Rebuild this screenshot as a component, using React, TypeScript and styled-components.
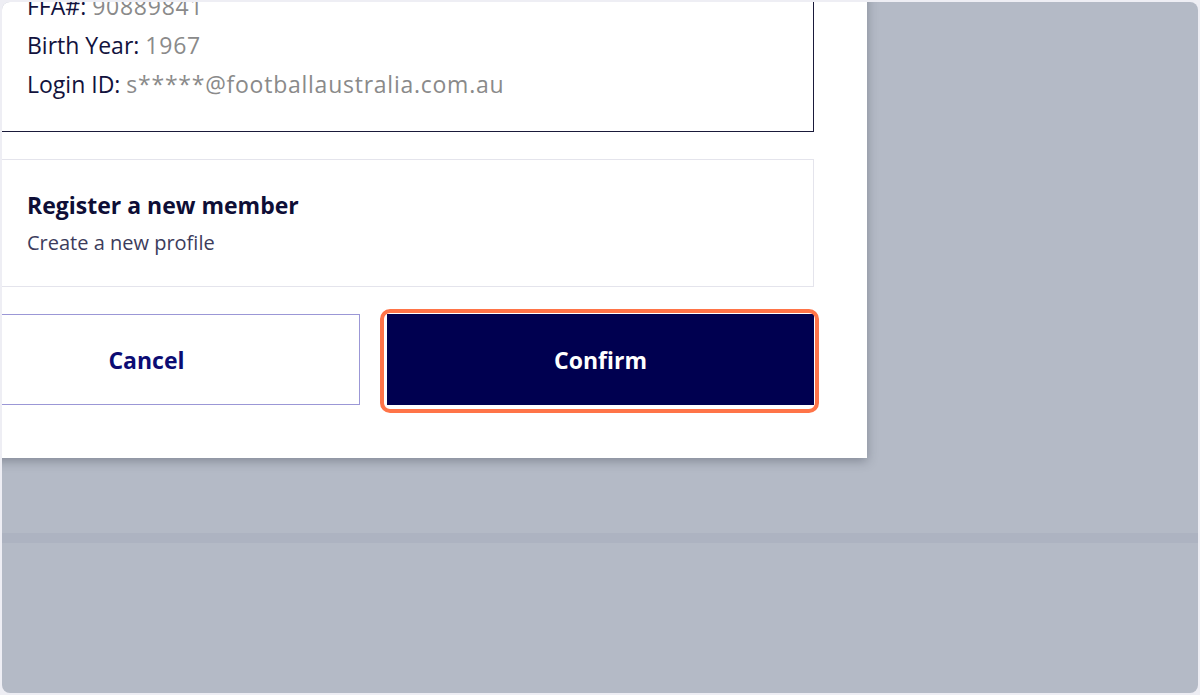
import React from "react";
import styled, { createGlobalStyle } from "styled-components";

const GlobalStyle = createGlobalStyle`
  html, body {
    margin: 0;
    padding: 0;
    background: #eeeef4;
    font-family: "Open Sans", Lato, sans-serif;
  }
  * { box-sizing: border-box; }
`;

const Frame = styled.div`
  margin: 2px;
  height: 691px;
  border-radius: 8px;
  overflow: hidden;
  background: #b4bac6;
  display: flex;
  flex-direction: column;
`;

const Modal = styled.div`
  margin: -96px 0 0 -122px;
  width: 987px;
  padding: 53px;
  background: #ffffff;
  box-shadow: 0 3px 10px rgba(40, 45, 60, 0.35);
  display: flex;
  flex-direction: column;
  gap: 27px;
  position: relative;
  z-index: 1;
`;

const Card = styled.div<{ $selected?: boolean }>`
  border: 1px solid ${(p) => (p.$selected ? "#1a1a3a" : "#e4e4ec")};
  padding: ${(p) => (p.$selected ? "27px 27px 27px 93px" : "30px 27px 29px 93px")};
  display: flex;
  flex-direction: column;
`;

const InfoLine = styled.div`
  font-size: 23px;
  line-height: 39px;
  color: #12123d;
  white-space: nowrap;
`;

const Value = styled.span`
  color: #8a8a8a;
  letter-spacing: 0.75px;
`;

const Title = styled.div`
  font-size: 23px;
  font-weight: 700;
  line-height: 31px;
  color: #0e0e36;
`;

const Subtitle = styled.div`
  font-size: 20px;
  line-height: 28px;
  color: #3c3c5c;
  margin-top: 8px;
`;

const Buttons = styled.div`
  display: grid;
  grid-template-columns: 1fr 1fr;
  gap: 27px;
`;

const Button = styled.button<{ $primary?: boolean }>`
  height: 91px;
  width: 100%;
  border: ${(p) => (p.$primary ? "none" : "1px solid #9b97d6")};
  background: ${(p) => (p.$primary ? "#000050" : "#ffffff")};
  color: ${(p) => (p.$primary ? "#ffffff" : "#0c0c73")};
  font-family: "Open Sans", sans-serif;
  font-size: 23px;
  font-weight: 700;
  cursor: pointer;
  padding: 0;
`;

const HighlightWrap = styled.div`
  position: relative;
`;

const Highlight = styled.span`
  position: absolute;
  top: -5px;
  bottom: -8px;
  left: -7px;
  right: -5px;
  border: 4px solid #ff7448;
  border-radius: 10px;
  pointer-events: none;
`;

const Band = styled.div`
  margin-top: 75px;
  height: 10px;
  background: #adb3c1;
`;

export default function App() {
  return (
    <>
      <GlobalStyle />
      <Frame>
        <Modal>
          <Card $selected>
            <InfoLine>
              FFA#: <Value>90889841</Value>
            </InfoLine>
            <InfoLine>
              Birth Year: <Value>1967</Value>
            </InfoLine>
            <InfoLine>
              Login ID: <Value>s*****@footballaustralia.com.au</Value>
            </InfoLine>
          </Card>
          <Card>
            <Title>Register a new member</Title>
            <Subtitle>Create a new profile</Subtitle>
          </Card>
          <Buttons>
            <Button>Cancel</Button>
            <HighlightWrap>
              <Button $primary>Confirm</Button>
              <Highlight />
            </HighlightWrap>
          </Buttons>
        </Modal>
        <Band />
      </Frame>
    </>
  );
}
